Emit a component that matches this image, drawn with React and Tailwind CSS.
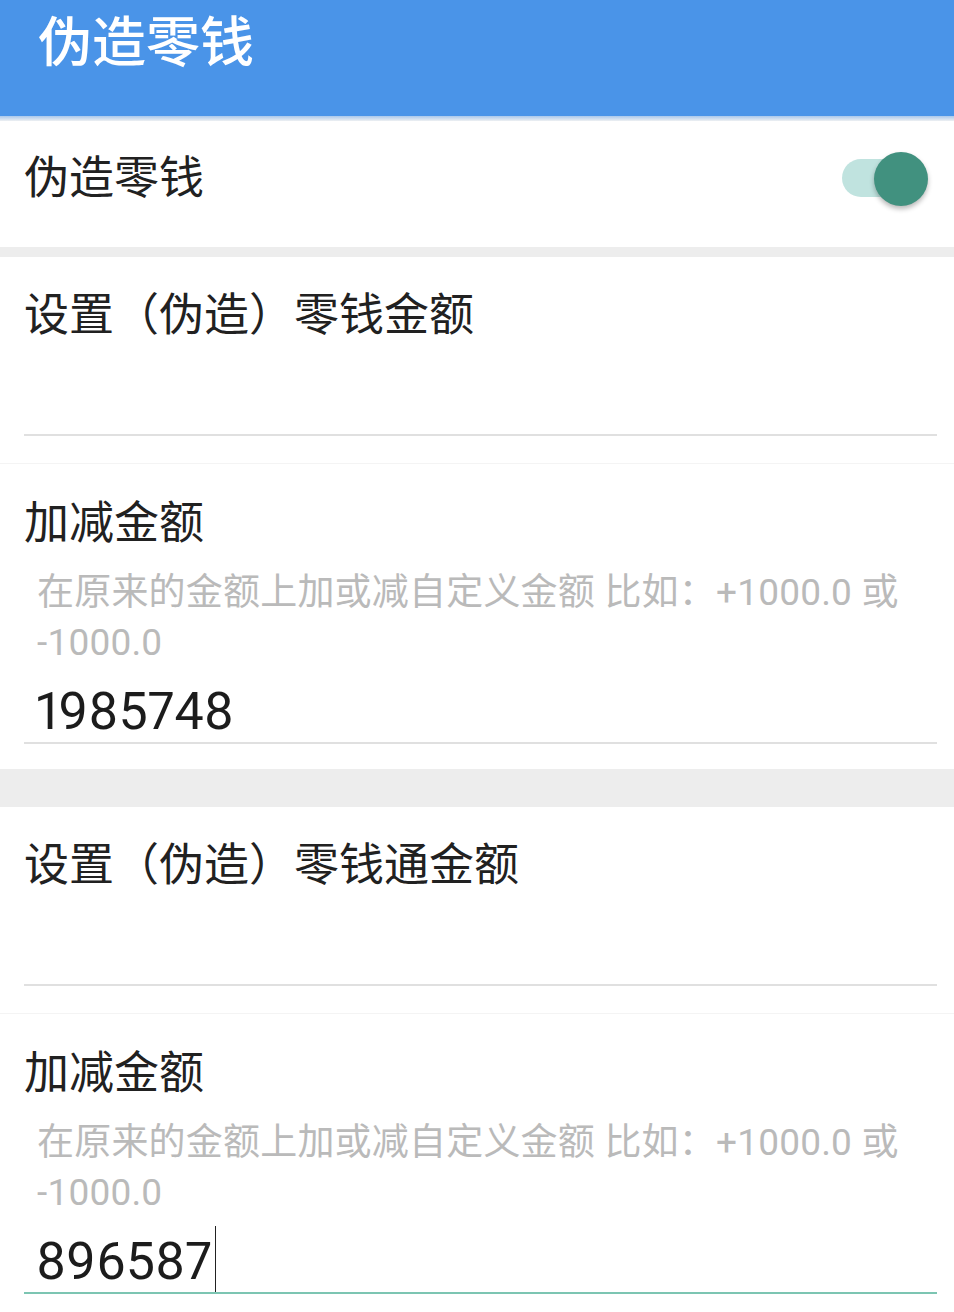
import React from "react";

const FONT = { fontFamily: "Roboto, 'Noto Sans CJK SC', sans-serif" };

function Toggle() {
  return (
    <div className="relative w-[86px] h-[54px]">
      <div className="absolute left-0 top-[7px] w-[64px] h-[38px] rounded-full bg-[#c0e3df]" />
      <div className="absolute right-0 top-0 w-[54px] h-[54px] rounded-full bg-[#41917f] shadow-[0_3px_5px_rgba(0,0,0,0.28)]" />
    </div>
  );
}

function EmptySection({ title }) {
  return (
    <div className="bg-white pt-[31px] pb-[27px]">
      <div className="pl-[24px] text-[45px] leading-[56px] text-[#212121]">{title}</div>
      <div className="ml-[24px] mr-[17px] h-[92px] border-b-2 border-[#e0e0e0]" />
    </div>
  );
}

function AmountSection({ value, focused }) {
  return (
    <div className="bg-white pt-[32px]">
      <div className="pl-[24px] text-[45px] leading-[56px] text-[#212121]">加减金额</div>
      <div className="mt-[16px] pl-[37px] pr-[17px] text-[37px] leading-[50px] text-[#bababa] tracking-[0.2px]">
        在原来的金额上加或减自定义金额 比如：+1000.0 或
        <br />
        -1000.0
      </div>
      <div
        className={
          "ml-[24px] mr-[17px] h-[76px] pt-[14px] pl-[12px] border-b-2 " +
          (focused ? "border-[#7cc5b2]" : "border-[#e0e0e0]")
        }
      >
        <div className="text-[52px] leading-[60px] text-[#1c1c1c] proportional-nums">
          <span className="relative">
            {value}
            {focused && (
              <span className="absolute right-[-4px] top-[-5px] w-[1px] h-[66px] bg-[#222222]" />
            )}
          </span>
        </div>
      </div>
    </div>
  );
}

export default function App() {
  return (
    <div className="w-[954px] h-[1312px] overflow-hidden bg-white" style={FONT}>
      <div className="h-[116px] bg-[#4a94e8] pl-[38px] pt-[5px]">
        <div className="text-[54px] leading-[78px] text-white font-medium">伪造零钱</div>
      </div>
      <div className="h-[5px] bg-gradient-to-b from-[#a9c8ec] to-[#eef0f2]" />
      <div className="h-[126px] pb-[11px] flex items-center justify-between pl-[24px] pr-[26px] bg-white">
        <div className="text-[45px] leading-[56px] text-[#212121]">伪造零钱</div>
        <Toggle />
      </div>
      <div className="h-[10px] bg-[#ededed]" />
      <EmptySection title="设置（伪造）零钱金额" />
      <div className="h-[1px] bg-[#f4f4f4]" />
      <AmountSection value="1985748" />
      <div className="h-[25px] bg-white" />
      <div className="h-[38px] bg-[#ededed]" />
      <EmptySection title="设置（伪造）零钱通金额" />
      <div className="h-[1px] bg-[#f4f4f4]" />
      <AmountSection value="896587" focused />
    </div>
  );
}
